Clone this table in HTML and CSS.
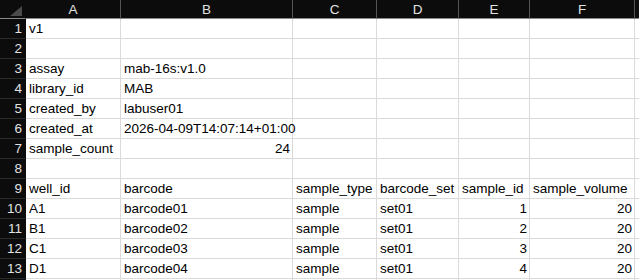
FILE: index.html
```html
<!DOCTYPE html>
<html>
<head>
<meta charset="utf-8">
<link rel="stylesheet" href="styles.css">
</head>
<body>
<div class="sheet">
  <div class="hdr corner"><span class="tri"></span></div>
  <div class="hdr col">A</div>
  <div class="hdr col">B</div>
  <div class="hdr col">C</div>
  <div class="hdr col">D</div>
  <div class="hdr col">E</div>
  <div class="hdr col">F</div>
  <div class="hdr col last"></div>

  <div class="rn">1</div><div class="c">v1</div><div class="c"></div><div class="c"></div><div class="c"></div><div class="c"></div><div class="c"></div><div class="c"></div>
  <div class="rn">2</div><div class="c"></div><div class="c"></div><div class="c"></div><div class="c"></div><div class="c"></div><div class="c"></div><div class="c"></div>
  <div class="rn">3</div><div class="c">assay</div><div class="c">mab-16s:v1.0</div><div class="c"></div><div class="c"></div><div class="c"></div><div class="c"></div><div class="c"></div>
  <div class="rn">4</div><div class="c">library_id</div><div class="c">MAB</div><div class="c"></div><div class="c"></div><div class="c"></div><div class="c"></div><div class="c"></div>
  <div class="rn">5</div><div class="c">created_by</div><div class="c">labuser01</div><div class="c"></div><div class="c"></div><div class="c"></div><div class="c"></div><div class="c"></div>
  <div class="rn">6</div><div class="c">created_at</div><div class="c">2026-04-09T14:07:14+01:00</div><div class="c"></div><div class="c"></div><div class="c"></div><div class="c"></div><div class="c"></div>
  <div class="rn">7</div><div class="c">sample_count</div><div class="c num">24</div><div class="c"></div><div class="c"></div><div class="c"></div><div class="c"></div><div class="c"></div>
  <div class="rn">8</div><div class="c"></div><div class="c"></div><div class="c"></div><div class="c"></div><div class="c"></div><div class="c"></div><div class="c"></div>
  <div class="rn">9</div><div class="c">well_id</div><div class="c">barcode</div><div class="c">sample_type</div><div class="c">barcode_set</div><div class="c">sample_id</div><div class="c">sample_volume</div><div class="c"></div>
  <div class="rn">10</div><div class="c">A1</div><div class="c">barcode01</div><div class="c">sample</div><div class="c">set01</div><div class="c num">1</div><div class="c num">20</div><div class="c"></div>
  <div class="rn">11</div><div class="c">B1</div><div class="c">barcode02</div><div class="c">sample</div><div class="c">set01</div><div class="c num">2</div><div class="c num">20</div><div class="c"></div>
  <div class="rn">12</div><div class="c">C1</div><div class="c">barcode03</div><div class="c">sample</div><div class="c">set01</div><div class="c num">3</div><div class="c num">20</div><div class="c"></div>
  <div class="rn">13</div><div class="c">D1</div><div class="c">barcode04</div><div class="c">sample</div><div class="c">set01</div><div class="c num">4</div><div class="c num">20</div><div class="c"></div>
  <div class="rn blank"></div><div class="c"></div><div class="c"></div><div class="c"></div><div class="c"></div><div class="c"></div><div class="c"></div><div class="c"></div>
</div>
</body>
</html>
```
FILE: styles.css
```css
html, body {
  margin: 0;
  padding: 0;
  background: #ffffff;
  overflow: hidden;
  height: 280px;
}
.sheet {
  display: grid;
  grid-template-columns: 26px 95px 172px 84px 82px 71px 105px 1fr;
  grid-template-rows: 19px repeat(14, 20px);
  width: 639px;
  height: 280px;
  overflow: hidden;
  font-family: "Liberation Sans", Arial, sans-serif;
  font-size: 13.5px;
  color: #000000;
}
.hdr {
  background: #0c0c0c;
  color: #e2e2e2;
  border-bottom: 1px solid #8a8a8a;
  border-right: 1px solid #555555;
  box-sizing: border-box;
  font-size: 13.5px;
  display: flex;
  align-items: center;
  justify-content: center;
}
.corner {
  position: relative;
  border-right: 1px solid #0c0c0c;
}
.tri {
  position: absolute;
  right: 3px;
  bottom: 2px;
  width: 0;
  height: 0;
  border-left: 12px solid transparent;
  border-bottom: 10px solid #4a4a4a;
}
.hdr.last {
  border-right: none;
}
.rn {
  background: #0c0c0c;
  color: #e2e2e2;
  font-size: 13.5px;
  box-sizing: border-box;
  border-bottom: 1px solid #2a2a2a;
  border-right: 1px solid #0c0c0c;
  display: flex;
  align-items: center;
  justify-content: flex-end;
  padding-right: 3px;
}
.c {
  box-sizing: border-box;
  border-right: 1px solid #dadada;
  border-bottom: 1px solid #dadada;
  padding: 0 2px 0 3px;
  display: flex;
  align-items: center;
  white-space: nowrap;
  overflow: visible;
}
.num {
  justify-content: flex-end;
}
```
